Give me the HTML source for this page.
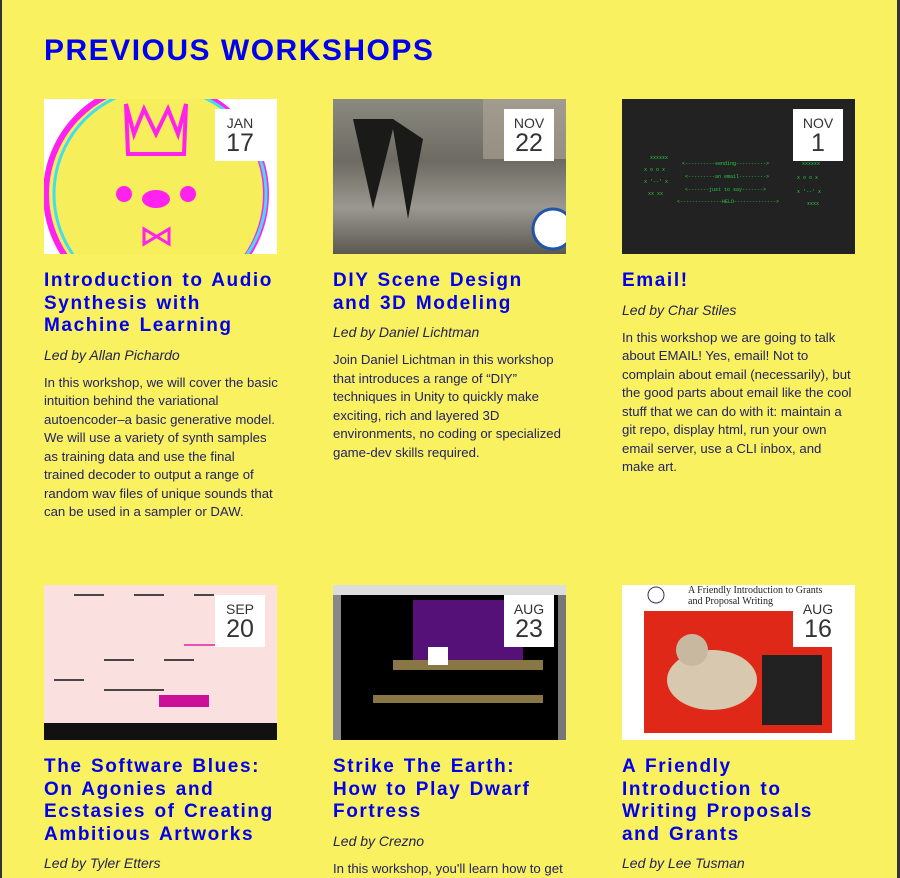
<!DOCTYPE html>
<html><head><style>
*{margin:0;padding:0;box-sizing:border-box}
body{width:900px;height:878px;background:#f9f15f;font-family:"Liberation Sans",sans-serif;position:relative;overflow:hidden;border-left:2px solid #333;border-right:3px solid #333}
h1{position:absolute;left:42px;top:34px;font-size:30px;font-weight:bold;color:#0000ee;letter-spacing:1.5px}
.card{position:absolute;width:233px}
.img{width:233px;height:155px;position:relative;overflow:hidden}
.date{position:absolute;right:12px;top:10px;width:50px;height:52px;background:#fff;text-align:center;color:#333}
.date .m{font-size:14px;margin-top:7px;line-height:14px}
.date .d{font-size:25px;line-height:26px}
h2{color:#0000ee;font-size:19px;font-weight:bold;letter-spacing:1.6px;word-spacing:1.5px;line-height:22.5px;margin-top:16px}
.by{font-style:italic;font-size:14px;color:#222255;margin-top:9px}
p{font-size:13.2px;line-height:18.5px;color:#222266;margin-top:11px;width:234px}
</style></head><body>
<h1>PREVIOUS WORKSHOPS</h1>

<div class="card" style="left:42px;top:99px">
<div class="img" style="background:#fff">
<svg width="233" height="155"><circle cx="112" cy="95" r="110" fill="#f6ee5a" stroke="#ff22ee" stroke-width="6"/><circle cx="116" cy="95" r="106" fill="none" stroke="#44ddee" stroke-width="3"/>
<path d="M82 5 L90 35 L100 10 L112 35 L124 10 L134 35 L142 5 L140 55 L84 55Z" fill="none" stroke="#ff22ee" stroke-width="4"/>
<circle cx="80" cy="95" r="8" fill="#ff22ee"/><circle cx="144" cy="95" r="8" fill="#ff22ee"/><ellipse cx="112" cy="100" rx="14" ry="9" fill="#ff22ee"/>
<path d="M100 130 L125 145 L125 130 L100 145Z" fill="none" stroke="#ff22ee" stroke-width="3"/></svg>
<div class="date"><div class="m">JAN</div><div class="d">17</div></div></div>
<h2>Introduction to Audio Synthesis with Machine Learning</h2>
<div class="by">Led by Allan Pichardo</div>
<p>In this workshop, we will cover the basic intuition behind the variational autoencoder–a basic generative model. We will use a variety of synth samples as training data and use the final trained decoder to output a range of random wav files of unique sounds that can be used in a sampler or DAW.</p>
</div>

<div class="card" style="left:331px;top:99px">
<div class="img" style="background:linear-gradient(180deg,#8a8a80 0%,#6d6a62 40%,#9a9890 70%,#5a5850 100%)">
<svg width="233" height="155"><path d="M20 20 L40 110 L60 30 L75 120 L90 40 L60 20Z" fill="#1a1a18"/><rect x="150" y="0" width="83" height="60" fill="#b0a89a" opacity=".6"/><circle cx="220" cy="130" r="20" fill="#fff" stroke="#2255aa" stroke-width="3"/></svg>
<div class="date"><div class="m">NOV</div><div class="d">22</div></div></div>
<h2>DIY Scene Design and 3D Modeling</h2>
<div class="by">Led by Daniel Lichtman</div>
<p>Join Daniel Lichtman in this workshop that introduces a range of “DIY” techniques in Unity to quickly make exciting, rich and layered 3D environments, no coding or specialized game-dev skills required.</p>
</div>

<div class="card" style="left:620px;top:99px">
<div class="img" style="background:#222">
<svg width="233" height="155" font-family="Liberation Mono" font-size="5" fill="#22cc44"><text x="28" y="60">xxxxxx</text><text x="22" y="72">x  o  o  x</text><text x="22" y="84">x   '--'  x</text><text x="26" y="96">xx    xx</text><text x="60" y="66">&lt;----------sending----------&gt;</text><text x="63" y="79">&lt;---------an email---------&gt;</text><text x="63" y="92">&lt;-------just to say-------&gt;</text><text x="55" y="104">&lt;--------------HELO--------------&gt;</text><text x="180" y="66">xxxxxx</text><text x="175" y="80">x  o  o  x</text><text x="175" y="94">x  '--'  x</text><text x="185" y="106">xxxx</text></svg>
<div class="date"><div class="m">NOV</div><div class="d">1</div></div></div>
<h2>Email!</h2>
<div class="by">Led by Char Stiles</div>
<p>In this workshop we are going to talk about EMAIL! Yes, email! Not to complain about email (necessarily), but the good parts about email like the cool stuff that we can do with it: maintain a git repo, display html, run your own email server, use a CLI inbox, and make art.</p>
</div>

<div class="card" style="left:42px;top:585px">
<div class="img" style="background:#fbe0e0">
<svg width="233" height="155" stroke="#111" fill="none" stroke-width="1.5"><path d="M30 10 L60 10 M90 10 L120 10 M150 10 L170 10"/><path d="M10 95 L40 95 M60 75 L90 75 M120 75 L150 75 M60 105 L120 105"/><path d="M140 60 L180 60" stroke="#dd22aa"/><rect x="115" y="110" width="50" height="12" fill="#cc1199" stroke="none"/><rect x="0" y="138" width="233" height="17" fill="#111" stroke="none"/></svg>
<div class="date"><div class="m">SEP</div><div class="d">20</div></div></div>
<h2>The Software Blues: On Agonies and Ecstasies of Creating Ambitious Artworks</h2>
<div class="by">Led by Tyler Etters</div>
</div>

<div class="card" style="left:331px;top:585px">
<div class="img" style="background:#000">
<svg width="233" height="155"><rect x="0" y="0" width="233" height="10" fill="#ddd"/><rect x="0" y="10" width="8" height="145" fill="#888"/><rect x="225" y="10" width="8" height="145" fill="#777"/><rect x="80" y="15" width="110" height="60" fill="#551177"/><rect x="60" y="75" width="150" height="10" fill="#887744"/><rect x="40" y="110" width="170" height="8" fill="#887744"/><rect x="95" y="62" width="20" height="18" fill="#fff"/></svg>
<div class="date"><div class="m">AUG</div><div class="d">23</div></div></div>
<h2>Strike The Earth: How to Play Dwarf Fortress</h2>
<div class="by">Led by Crezno</div>
<p>In this workshop, you'll learn how to get</p>
</div>

<div class="card" style="left:620px;top:585px">
<div class="img" style="background:#fff">
<div style="position:absolute;left:66px;top:0;font-family:'Liberation Serif',serif;font-size:10px;color:#222;line-height:11px">A Friendly Introduction to Grants<br>and Proposal Writing</div>
<svg width="233" height="155"><circle cx="34" cy="10" r="8" fill="none" stroke="#336"/><rect x="22" y="26" width="188" height="122" fill="#e02818"/><ellipse cx="90" cy="95" rx="45" ry="30" fill="#d8c8b0"/><circle cx="70" cy="65" r="16" fill="#c8b8a0"/><rect x="140" y="70" width="60" height="70" fill="#222"/></svg>
<div class="date"><div class="m">AUG</div><div class="d">16</div></div></div>
<h2>A Friendly Introduction to Writing Proposals and Grants</h2>
<div class="by">Led by Lee Tusman</div>
</div>
</body></html>
